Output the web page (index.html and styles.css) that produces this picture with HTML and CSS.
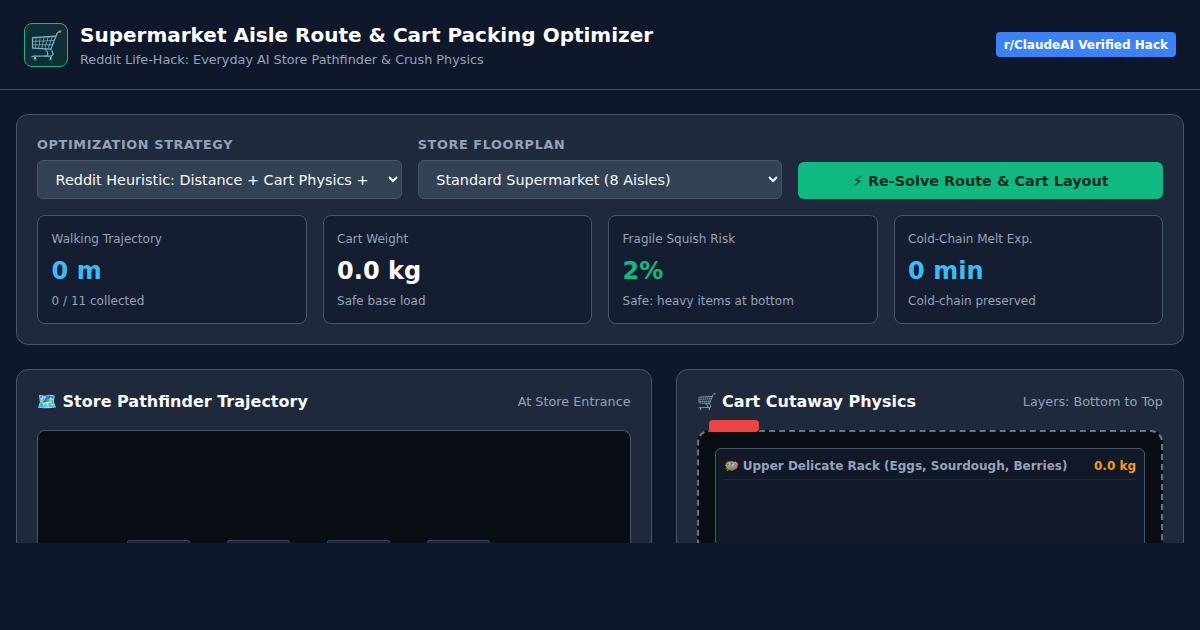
FILE: index.html
```html
<!DOCTYPE html>
<html lang="en">
<head>
  <meta charset="UTF-8" />
  <title>Supermarket Aisle Route &amp; Cart Packing Optimizer</title>
  <link rel="stylesheet" href="styles.css">
</head>
<body>

<div class="app">
  <header class="top-bar">
    <div class="brand">
      <div class="brand-icon">🛒</div>
      <div>
        <h1>Supermarket Aisle Route &amp; Cart Packing Optimizer</h1>
        <p>Reddit Life-Hack: Everyday AI Store Pathfinder &amp; Crush Physics</p>
      </div>
    </div>
    <span class="badge">r/ClaudeAI Verified Hack</span>
  </header>

  <main class="content">
    <section class="panel controls">
      <div class="control-row">
        <div class="field">
          <label for="strategy">Optimization Strategy</label>
          <select id="strategy">
            <option>Reddit Heuristic: Distance + Cart Physics + Cold Chain</option>
          </select>
        </div>
        <div class="field">
          <label for="floorplan">Store Floorplan</label>
          <select id="floorplan">
            <option>Standard Supermarket (8 Aisles)</option>
          </select>
        </div>
        <button class="solve-btn">⚡ Re-Solve Route &amp; Cart Layout</button>
      </div>

      <div class="stats">
        <div class="stat">
          <div class="stat-label">Walking Trajectory</div>
          <div class="stat-value blue">0 m</div>
          <div class="stat-note">0 / 11 collected</div>
        </div>
        <div class="stat">
          <div class="stat-label">Cart Weight</div>
          <div class="stat-value">0.0 kg</div>
          <div class="stat-note">Safe base load</div>
        </div>
        <div class="stat">
          <div class="stat-label">Fragile Squish Risk</div>
          <div class="stat-value green">2%</div>
          <div class="stat-note">Safe: heavy items at bottom</div>
        </div>
        <div class="stat">
          <div class="stat-label">Cold-Chain Melt Exp.</div>
          <div class="stat-value blue">0 min</div>
          <div class="stat-note">Cold-chain preserved</div>
        </div>
      </div>
    </section>

    <div class="columns">
      <section class="panel">
        <div class="panel-head">
          <h2>🗺️ Store Pathfinder Trajectory</h2>
          <span class="panel-note">At Store Entrance</span>
        </div>
        <div class="store-map">
          <div class="aisle aisle-1"></div>
          <div class="aisle aisle-2"></div>
          <div class="aisle aisle-3"></div>
          <div class="aisle aisle-4"></div>
        </div>
      </section>

      <section class="panel">
        <div class="panel-head">
          <h2>🛒 Cart Cutaway Physics</h2>
          <span class="panel-note">Layers: Bottom to Top</span>
        </div>
        <div class="cart">
          <div class="cart-handle"></div>
          <div class="rack">
            <div class="rack-head">
              <span>🪺 Upper Delicate Rack (Eggs, Sourdough, Berries)</span>
              <span class="rack-weight">0.0 kg</span>
            </div>
          </div>
        </div>
      </section>
    </div>
  </main>
</div>

</body>
</html>
```

FILE: styles.css
```css
* { margin: 0; padding: 0; box-sizing: border-box; }
html, body { height: 100%; }
body { background: #0f172a; color: #f8fafc; font-family: "DejaVu Sans", sans-serif; overflow: hidden; }

.app { height: 543px; overflow: hidden; }

.top-bar { height: 90px; padding: 1px 24px 0; display: flex; justify-content: space-between; align-items: center; border-bottom: 1px solid #475569; }
.brand { display: flex; align-items: center; gap: 12px; }
.brand-icon { width: 44px; height: 44px; display: flex; justify-content: center; align-items: center; font-size: 28px; background: rgba(16,185,129,0.15); border: 1px solid #10b981; border-radius: 8px; }
.top-bar h1 { font-size: 20px; font-weight: 700; line-height: 28px; color: #fff; }
.top-bar p { font-size: 12.8px; line-height: 19px; margin-top: 1px; color: #94a3b8; }
.badge { margin-bottom: 1px; background: #3b82f6; color: #fff; font-size: 12px; font-weight: 700; padding: 5px 8px 3px; border-radius: 4px; line-height: 17px; }

.content { padding: 24px 16px; display: flex; flex-direction: column; gap: 24px; }
.panel { background: #1e293b; border: 1px solid #475569; border-radius: 12px; padding: 20px; }

.control-row { display: grid; grid-template-columns: repeat(3, 1fr); gap: 16px; align-items: end; }
.field { display: flex; flex-direction: column; gap: 8px; min-width: 0; }
.field label { padding-top: 2px; font-size: 12.8px; font-weight: 700; letter-spacing: 0.05em; line-height: 15px; text-transform: uppercase; color: #94a3b8; }
.field select { width: 100%; height: 39px; padding: 0 13.6px; font-family: inherit; font-size: 14.4px; color: #f8fafc; background: #334155; border: 1px solid #475569; border-radius: 6px; }
.solve-btn { height: 37px; font-family: inherit; font-size: 14.4px; font-weight: 700; color: #022c22; background: #10b981; border: 0; border-radius: 6px; }

.stats { display: grid; grid-template-columns: repeat(4, 1fr); gap: 16px; margin-top: 16px; }
.stat { height: 109px; padding: 14px 13.6px; background: rgba(15,23,42,0.6); border: 1px solid #475569; border-radius: 8px; }
.stat-label { font-size: 12px; line-height: 18px; color: #94a3b8; }
.stat-value { font-size: 24px; font-weight: 700; line-height: 28px; margin-top: 9px; color: #fff; }
.stat-value.blue { color: #38bdf8; }
.stat-value.green { color: #10b981; }
.stat-note { font-size: 12px; line-height: 18px; margin-top: 7px; color: #94a3b8; }

.columns { display: grid; grid-template-columns: 1.25fr 1fr; gap: 24px; }
.panel-head { display: flex; justify-content: space-between; align-items: center; height: 23px; margin-bottom: 17px; }
.panel-head h2 { font-size: 16px; font-weight: 700; color: #f8fafc; }
.panel-note { font-size: 12.8px; color: #94a3b8; }

.store-map { position: relative; height: 400px; background: #090d14; border: 1px solid #475569; border-radius: 8px; }
.aisle { position: absolute; top: 109px; width: 63px; height: 120px; background: #1e293b; border: 1px solid #334155; border-radius: 2px; }
.aisle-1 { left: 89px; }
.aisle-2 { left: 189px; }
.aisle-3 { left: 289px; }
.aisle-4 { left: 389px; }

.cart { position: relative; height: 400px; padding: 16px; background: #090d14; border: 2px dashed #64748b; border-radius: 12px; }
.cart-handle { position: absolute; top: -12px; left: 10px; width: 50px; height: 12px; background: #ef4444; border-radius: 4px; }
.rack { height: 300px; padding: 8px; background: #111827; border: 1px solid #475569; border-radius: 6px; }
.rack-head { display: flex; justify-content: space-between; align-items: center; height: 23px; padding: 1px 0 5px; font-size: 12px; font-weight: 700; color: #94a3b8; border-bottom: 1px solid #1e293b; }
.rack-weight { color: #f59e0b; }
```
